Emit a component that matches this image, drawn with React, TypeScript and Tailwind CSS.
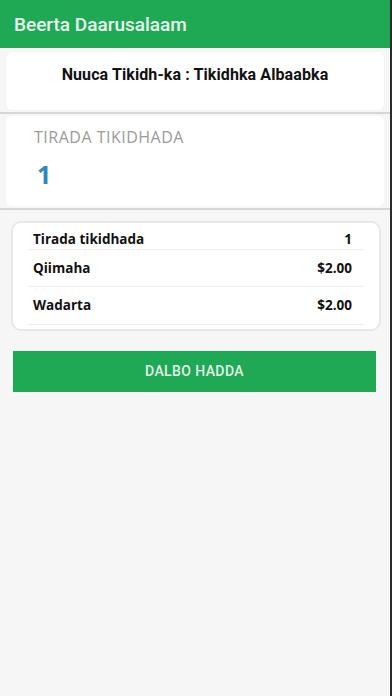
import React from "react";

export default function App() {
  return (
    <div className="w-[392px] h-[696px] bg-[#f6f6f6] border-r-2 border-[#2b2b2b] overflow-hidden" style={{ fontFamily: "Roboto, 'Liberation Sans', sans-serif" }}>
      <div className="h-12 bg-[#1fa955] flex items-center pl-[14px] pt-[3px]">
        <span className="text-[19px] font-medium text-[#e9f6ee]">Beerta Daarusalaam</span>
      </div>
      <div className="mx-[6px] mt-[4px] h-[58px] bg-white rounded-md shadow-[0_0_2px_rgba(0,0,0,0.06)] flex items-start justify-center pt-[11px]">
        <span className="text-[16px] font-bold text-[#111] tracking-[0.1px]">Nuuca Tikidh-ka : Tikidhka Albaabka</span>
      </div>
      <div className="h-[2px] bg-[#d6d6d6] mt-[2px]" />
      <div className="mx-[6px] mt-[2px] h-[90px] bg-white rounded-md pl-[28px] pt-[12px]">
        <div className="text-[16px] text-[#9a9a9a] leading-[18px] tracking-[0.5px]" style={{ fontFamily: "'Open Sans', sans-serif" }}>TIRADA TIKIDHADA</div>
        <div className="text-[25px] font-bold text-[#2f86c0] leading-none mt-[16px] pl-[3px]" style={{ fontFamily: "'Open Sans', sans-serif" }}>1</div>
      </div>
      <div className="h-[2px] bg-[#d6d6d6] mt-[2px]" />
      <div className="mx-[11px] mt-[11px] w-[370px] bg-white rounded-[10px] border-2 border-[#e8e8e8] px-[15px] pt-[7px] pb-[4px]" style={{ fontFamily: "'Open Sans', sans-serif" }}>
        <div className="h-[20px] flex items-center justify-between border-b border-[#eeeeee] pl-[5px] pr-[12px]">
          <span className="text-[13.5px] font-bold text-[#111]">Tirada tikidhada</span>
          <span className="text-[13.5px] font-bold text-[#111]">1</span>
        </div>
        <div className="h-[37px] flex items-center justify-between border-b border-[#eeeeee] pl-[5px] pr-[12px]">
          <span className="text-[13.5px] font-bold text-[#111]">Qiimaha</span>
          <span className="text-[13.5px] font-bold text-[#111]">$2.00</span>
        </div>
        <div className="h-[38px] flex items-center justify-between border-b border-[#eeeeee] pl-[5px] pr-[12px]">
          <span className="text-[13.5px] font-bold text-[#111]">Wadarta</span>
          <span className="text-[13.5px] font-bold text-[#111]">$2.00</span>
        </div>
      </div>
      <div className="mx-[13px] mt-[20px] w-[363px] h-[41px] bg-[#1fa955] flex items-center justify-center">
        <span className="text-[14px] font-medium text-[#e3f4e9] tracking-[0.4px]">DALBO HADDA</span>
      </div>
    </div>
  );
}
